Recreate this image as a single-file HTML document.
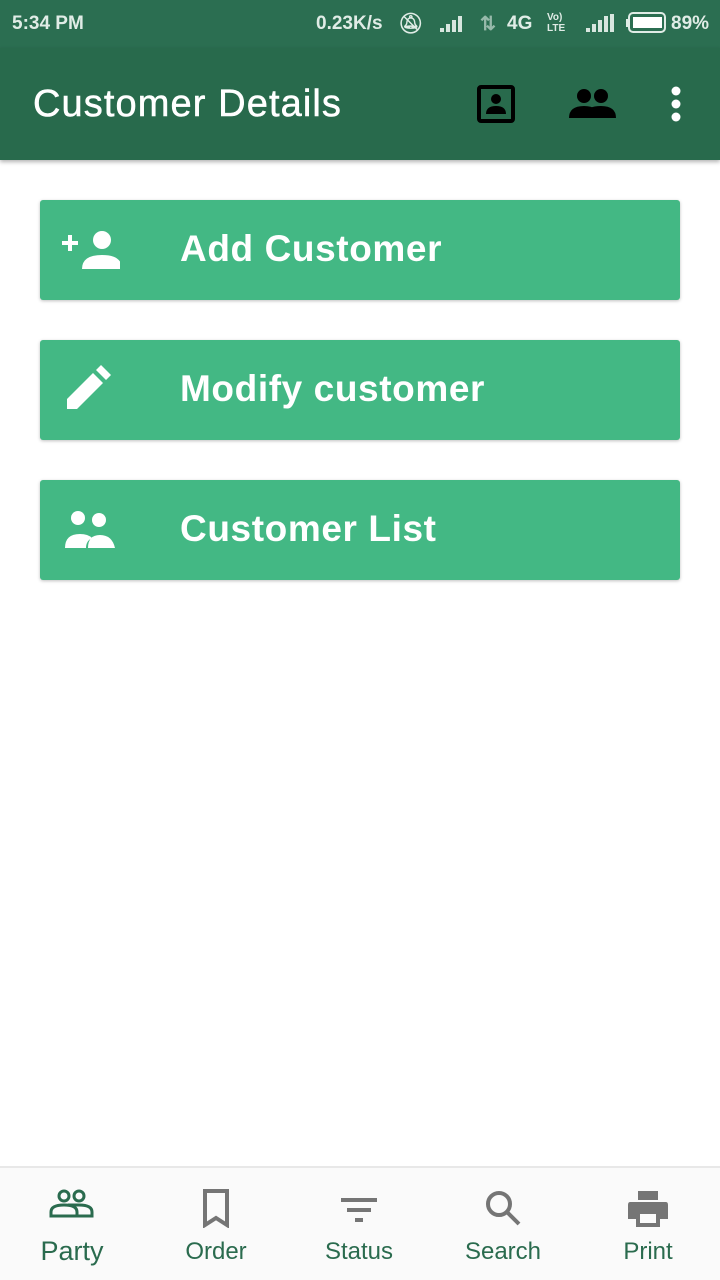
<!DOCTYPE html>
<html><head><meta charset="utf-8"><style>
*{margin:0;padding:0;box-sizing:border-box}
body{width:720px;height:1280px;position:relative;background:#fff;font-family:"Liberation Sans",sans-serif;overflow:hidden}
.sb{position:absolute;top:0;left:0;width:720px;height:48px;background:#2b6e51;color:#e0ece6;font-size:19px;font-weight:bold}
.tb{position:absolute;top:48px;left:0;width:720px;height:112px;background:#286a4c;box-shadow:0 2px 4px rgba(0,0,0,.3)}
.tb h1{position:absolute;left:33px;top:35px;color:#fff;font-size:38px;font-weight:normal;letter-spacing:1.1px;-webkit-text-stroke:0.5px #fff}
.btn{position:absolute;left:40px;width:640px;height:100px;background:#43b884;border-radius:3px;box-shadow:0 1px 3px rgba(0,0,0,.25);color:#fff;font-size:37px;font-weight:bold;letter-spacing:0.6px}
.btn span{position:absolute;left:140px;top:28px}
.btn svg{position:absolute;left:20px;top:25px}
.nav{position:absolute;top:1166px;left:0;width:720px;height:114px;background:#fafafa;border-top:2px solid #e8e8e8}
.it{position:absolute;top:0;width:144px;text-align:center}
.it .l{position:absolute;top:70px;left:0;width:100%;font-size:24px;color:#2a6b4e}
.it svg{position:absolute;top:20px;left:50%;margin-left:-24px}
</style></head><body>
<div class="sb">
<span style="position:absolute;left:12px;top:13px">5:34 PM</span>
<span style="position:absolute;left:316px;top:13px">0.23K/s</span>
<span style="position:absolute;left:398px;top:11px;font-size:20px">🔕︎</span>
<svg style="position:absolute;left:438px;top:14px" width="28" height="20"><path d="M2 18h4v-4H2zM8 18h4V10H8zM14 18h4V6h-4zM20 18h4V2h-4z" fill="#d8e6df"/></svg>
<span style="position:absolute;left:480px;top:13px;opacity:.6">⇅</span>
<span style="position:absolute;left:507px;top:13px">4G</span>
<span style="position:absolute;left:547px;top:12px;font-size:10px;line-height:11px">Vo)<br>LTE</span>
<svg style="position:absolute;left:584px;top:14px" width="32" height="20"><path d="M2 18h4v-4H2zM8 18h4V10H8zM14 18h4V6h-4zM20 18h4V2h-4zM26 18h4V0h-4z" fill="#d8e6df"/></svg>
<svg style="position:absolute;left:626px;top:12px" width="42" height="22"><rect x="3" y="1" width="36" height="19" rx="4" fill="none" stroke="#e0ece6" stroke-width="2"/><rect x="7" y="5" width="29" height="11" fill="#fff"/><rect x="0" y="7" width="3" height="8" fill="#e0ece6"/></svg>
<span style="position:absolute;left:671px;top:13px">89%</span>
</div>
<div class="tb"><h1>Customer Details</h1>
<svg style="position:absolute;left:476px;top:36px" width="40" height="40"><rect x="3" y="3" width="34" height="34" rx="2" fill="none" stroke="#000" stroke-width="4"/><circle cx="20" cy="15" r="5"/><path d="M10 30q0-8 10-8t10 8z"/></svg>
<svg style="position:absolute;left:568px;top:38px" width="48" height="34"><circle cx="16" cy="10" r="7"/><circle cx="33" cy="10" r="7"/><path d="M1 32q0-12 15-12t15 12zM22 22q4-2 11-2 15 0 15 12H31q0-6-9-10z"/></svg>
<svg style="position:absolute;left:668px;top:38px" width="16" height="36"><circle cx="8" cy="5" r="4.5" fill="#fff"/><circle cx="8" cy="18" r="4.5" fill="#fff"/><circle cx="8" cy="31" r="4.5" fill="#fff"/></svg>
</div>
<div class="btn" style="top:200px"><svg width="60" height="50"><path d="M2 18h16M10 10v16" stroke="#fff" stroke-width="4"/><circle cx="42" cy="15" r="9" fill="#fff"/><path d="M22 44q0-14 20-14t20 14z" fill="#fff"/></svg><span>Add Customer</span></div>
<div class="btn" style="top:340px"><svg width="60" height="50"><path d="M7 44v-10l26-26 10 10-26 26z M36 5l5-5 10 10-5 5z" fill="#fff"/></svg><span>Modify customer</span></div>
<div class="btn" style="top:480px"><svg width="60" height="50"><circle cx="18" cy="13" r="7" fill="#fff"/><circle cx="39" cy="15" r="7" fill="#fff"/><path d="M5 43q0-14 15-14 8 0 12 4-6 3-6 10zM28 43q0-13 12-13t15 13z" fill="#fff"/></svg><span>Customer List</span></div>
<div class="nav">
<div class="it" style="left:0"><svg width="48" height="36"><g fill="none" stroke="#2a6b4e" stroke-width="3"><circle cx="16" cy="8" r="5"/><circle cx="31" cy="8" r="5"/><path d="M3 28v-4q0-7 13-7t13 7v4zM20 17q2-0 11 0 13 0 13 7v4H29"/></g></svg><div class="l" style="font-size:27px;top:68px">Party</div></div>
<div class="it" style="left:144px"><svg width="48" height="40"><path d="M13 3h22v34l-11-7-11 7z" fill="none" stroke="#757575" stroke-width="4"/></svg><div class="l">Order</div></div>
<div class="it" style="left:287px"><svg width="48" height="40"><path d="M6 12h36M12 22h24M20 32h8" stroke="#757575" stroke-width="4"/></svg><div class="l">Status</div></div>
<div class="it" style="left:431px"><svg width="48" height="40"><circle cx="20" cy="16" r="11" fill="none" stroke="#757575" stroke-width="4"/><path d="M28 24l12 12" stroke="#757575" stroke-width="4"/></svg><div class="l">Search</div></div>
<div class="it" style="left:576px"><svg width="48" height="40"><path d="M14 3h20v9H14zM6 14h36q2 0 2 3v14h-8v8H12v-8H4V17q0-3 2-3zM16 26v9h16v-9z" fill="#757575" fill-rule="evenodd"/></svg><div class="l">Print</div></div>
</div>
</body></html>
